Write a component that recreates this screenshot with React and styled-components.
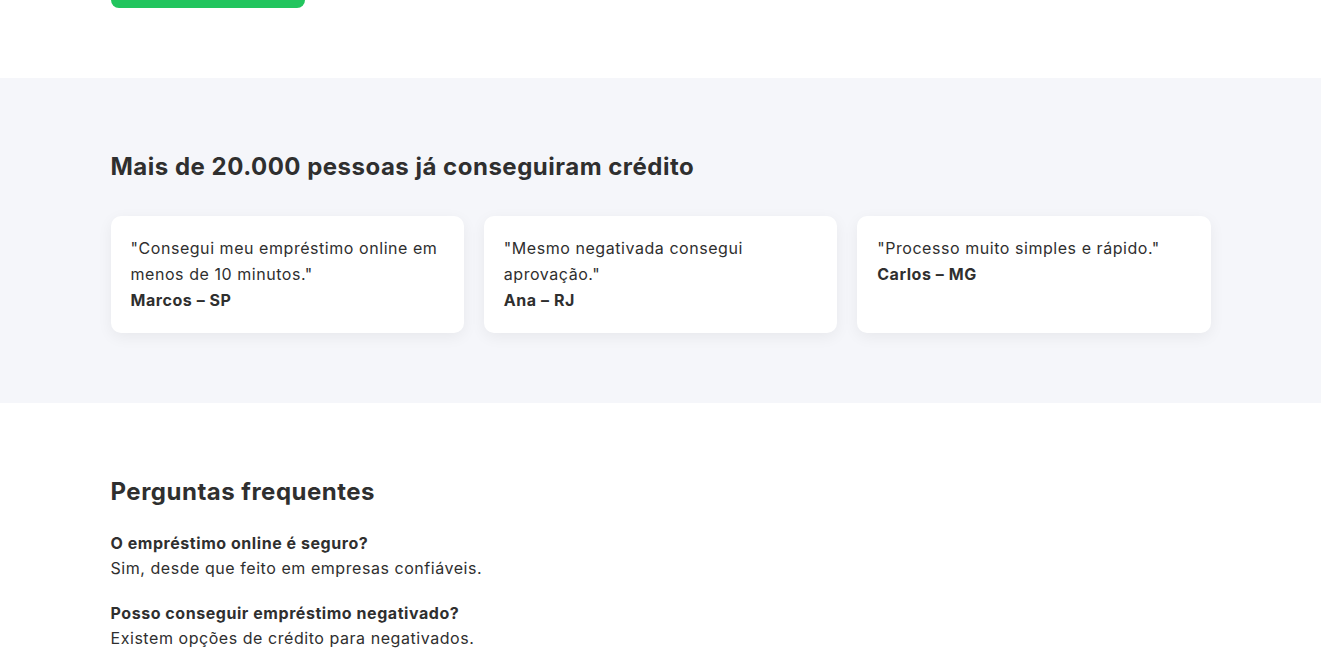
import React from 'react';
import styled, { createGlobalStyle } from 'styled-components';

const GlobalStyle = createGlobalStyle`
  * { box-sizing: border-box; }
  body {
    margin: 0;
    font-family: "Inter", "Open Sans", sans-serif;
    color: #2f2f2f;
    background: #fff;
    line-height: 1.6;
  }
`;

/* the page is shown scrolled down, so the CTA above is only half visible */
const Page = styled.div`
  margin-top: -132px;
`;

const Section = styled.section`
  padding: 70px 0;
  background: ${p => (p.$alt ? '#f5f6fa' : '#fff')};
`;

const Container = styled.div`
  width: 1100px;
  margin: 0 auto;
`;

const CtaButton = styled.a`
  display: block;
  width: 194px;
  height: 70px;
  background: #22c55e;
  border-radius: 8px;
`;

const Title = styled.h2`
  margin: 0 0 ${p => p.$gap || 30}px;
  font-size: 24px;
  font-weight: 700;
  line-height: 1.6;
  letter-spacing: 0.5px;
  color: #2f2f2f;
`;

const Grid = styled.div`
  display: grid;
  grid-template-columns: repeat(3, 1fr);
  gap: 20px;
`;

const Card = styled.div`
  background: #fff;
  border-radius: 10px;
  padding: 20px;
  box-shadow: 0 4px 15px rgba(0, 0, 0, 0.06);
  font-size: 16px;
  line-height: 1.6;
  letter-spacing: 0.55px;
`;

const Quote = styled.div`
  font-weight: 400;
`;

const Author = styled.div`
  font-weight: 700;
`;

const Faq = styled.div`
  margin-bottom: 19px;
  font-size: 16px;
  letter-spacing: 0.55px;
`;

const Question = styled.div`
  font-weight: 700;
`;

const Answer = styled.div``;

const testimonials = [
  { text: '"Consegui meu empréstimo online em menos de 10 minutos."', who: 'Marcos – SP' },
  { text: '"Mesmo negativada consegui aprovação."', who: 'Ana – RJ' },
  { text: '"Processo muito simples e rápido."', who: 'Carlos – MG' },
];

const faqs = [
  { q: 'O empréstimo online é seguro?', a: 'Sim, desde que feito em empresas confiáveis.' },
  { q: 'Posso conseguir empréstimo negativado?', a: 'Existem opções de crédito para negativados.' },
];

export default function App() {
  return (
    <>
      <GlobalStyle />
      <Page>
        <Section>
          <Container>
            <CtaButton />
          </Container>
        </Section>
        <Section $alt>
          <Container>
            <Title>Mais de 20.000 pessoas já conseguiram crédito</Title>
            <Grid>
              {testimonials.map(t => (
                <Card key={t.who}>
                  <Quote>{t.text}</Quote>
                  <Author>{t.who}</Author>
                </Card>
              ))}
            </Grid>
          </Container>
        </Section>
        <Section>
          <Container>
            <Title $gap={19}>Perguntas frequentes</Title>
            {faqs.map(f => (
              <Faq key={f.q}>
                <Question>{f.q}</Question>
                <Answer>{f.a}</Answer>
              </Faq>
            ))}
          </Container>
        </Section>
      </Page>
    </>
  );
}
